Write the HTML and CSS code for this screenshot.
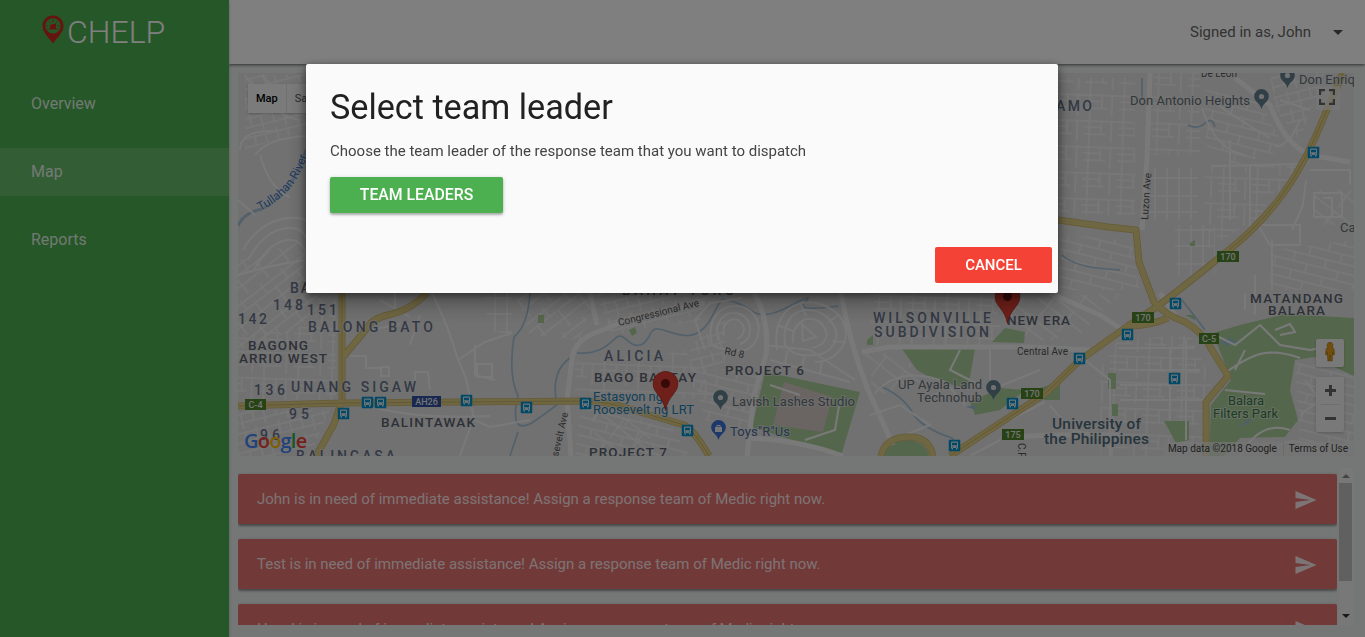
FILE: index.html
```html
<!DOCTYPE html>
<html lang="en">
<head>
<meta charset="utf-8">
<title>CHELP</title>
<link rel="stylesheet" href="styles.css">
</head>
<body>
<div class="app">
  <nav class="sidebar">
    <div class="brand">
      <svg class="brand-pin" viewBox="0 0 22 29" width="22" height="29">
        <path fill="#c82a20" fill-rule="evenodd" d="M11 0.5C4.8.5.5 5 .5 10.8.5 17.200 6 22 11 28.500 16 22 21.500 17.200 21.500 10.800 21.500 5 17.200.5 11 .5ZM11 3.300a7.600 7.600 0 1 1 0 15.200 7.600 7.600 0 0 1 0-15.200Z"/>
        <path fill="#c82a20" d="M8 10L11 9 14 8.500V13.500H15V14.500H7V13.500H8Z"/>
        <path stroke="#c82a20" stroke-width=".9" d="M11 4.500v2.500M6.600 6.300l1.700 1.700M15.400 6.300l-1.700 1.700M4.500 10.800h2M15.500 10.800h2M5.300 14h1M15.700 14h1"/>
      </svg>
      <span>CHELP</span>
    </div>
    <ul class="menu">
      <li>Overview</li>
      <li class="active">Map</li>
      <li>Reports</li>
    </ul>
  </nav>
  <div class="page">
    <header class="topbar"><span>Signed in as, John</span><i class="caret"></i></header>
    <main class="content">
      <section class="map">
        <svg class="map-canvas" viewBox="238 73 1116 383" width="1116" height="383">
          <defs>
            <pattern id="g1" width="34" height="26" patternUnits="userSpaceOnUse" patternTransform="rotate(2)"><path class="st" d="M0 5H34M0 18H22M0 11H17M5 0V26M17 5V18M27 5V26"/></pattern>
            <pattern id="g2" width="26" height="32" patternUnits="userSpaceOnUse" patternTransform="rotate(-38)"><path class="st" d="M0 4H26M0 12H26M0 22H26M4 0V12M15 12V32"/></pattern>
            <pattern id="g3" width="32" height="18" patternUnits="userSpaceOnUse" patternTransform="rotate(14)"><path class="st" d="M0 3H32M0 12H32M6 3V12M20 0V3M20 12V18"/></pattern>
            <pattern id="g4" width="12" height="34" patternUnits="userSpaceOnUse"><path class="st" d="M3 0V34M0 8H12M0 26H12"/></pattern>
            <pattern id="g5" width="23" height="19" patternUnits="userSpaceOnUse" patternTransform="rotate(-14)"><path class="st" d="M0 4H23M0 13H23M7 0V13M18 4V19"/></pattern>
            <pattern id="g6" width="24" height="30" patternUnits="userSpaceOnUse" patternTransform="rotate(38)"><path class="st" d="M0 5H24M0 16H24M6 5V30"/></pattern>
            <symbol id="bus" viewBox="0 0 12 12"><rect width="12" height="12" rx="1.200" fill="#0591cf"/><path fill="#dcebf2" fill-rule="evenodd" d="M3.500 2h5q1 0 1 1v5.500H9V10H7.500V8.500h-3V10H3V8.500h-.5V3q0-1 1-1ZM3.500 3.300v2.500h5V3.300ZM3.500 7v.9h1V7ZM7.500 7v.9h1V7Z"/></symbol>
            <symbol id="pin" viewBox="0 0 26 40"><path fill="#e04034" stroke="#a52a20" stroke-width=".7" d="M13 .5C6 .5.5 6 .5 12.500.5 22 10.500 25 13 39.500 15.500 25 25.500 22 25.500 12.500 25.500 6 20 .5 13 .5Z"/><circle cx="13" cy="12.500" r="4.500" fill="#6b1510"/></symbol>
            <symbol id="poi" viewBox="0 0 15 20"><path d="M7.500 0A7.300 7.300 0 0 0 .2 7.500C.2 13 6 14 7.500 20 9 14 14.800 13 14.800 7.500A7.300 7.300 0 0 0 7.500 0Z"/></symbol>
            <path id="river" d="M260 211Q286 198 298 177T307 145"/>
          </defs>
          <rect x="238" y="73" width="1116" height="383" fill="#e2e2e3"/>
          <path fill="url(#g2)" d="M238 260L325 235 338 290 295 330 238 350Z"/>
          <path fill="url(#g1)" d="M238 335L295 330 336 300V400H238Z"/>
          <path fill="url(#g5)" d="M238 410H330L310 456H238ZM245 75H306V130L245 150Z"/>
          <path fill="url(#g4)" d="M485 293H512V335L488 330Z"/>
          <path fill="url(#g2)" d="M515 293H595L580 340 530 335Z"/>
          <path fill="url(#g5)" d="M595 293H710L700 320 612 335ZM690 345L725 320 725 370 690 375Z"/>
          <path fill="url(#g1)" d="M575 360L685 350 720 400 610 395 575 390Z"/>
          <path fill="url(#g3)" d="M580 405L670 425 690 456H575ZM690 365L765 375 750 430 705 420Z"/>
          <path fill="url(#g6)" d="M590 412L660 424 640 456H600Z"/>
          <path fill="url(#g1)" d="M870 293H1000V345H870Z"/>
          <path fill="url(#g6)" d="M862 355L900 352 930 385 875 395Z"/>
          <path fill="url(#g1)" d="M1058 78H1135V215H1058ZM1150 73H1200V155H1150Z"/>
          <path fill="url(#g4)" d="M1145 168H1198V220H1145ZM1175 225H1215V275H1175Z"/>
          <path fill="url(#g3)" d="M1205 90L1260 100 1285 150 1235 165 1205 145ZM1060 235L1132 240 1140 290H1060Z"/>
          <path fill="url(#g5)" d="M1270 73H1325L1300 140 1275 110Z"/>
          <path fill="url(#g1)" d="M1205 165H1300L1255 220 1205 250ZM1118 340L1190 335 1212 380 1200 456H1100V370Z"/>
          <path fill="url(#g3)" d="M1295 360L1354 375V456H1300ZM1270 250L1354 240V290H1270Z"/>
          <path fill="url(#g6)" d="M1315 190H1354V225H1315ZM1000 300L1120 293 1080 335 1020 345Z"/>

          <g fill="#a9cf99">
            <path d="M765 372L860 392 841 456 752 427Z"/>
            <path d="M902 349H975L968 388Q935 382 917 370Z"/>
            <path d="M970 402L1000 388 1025 390 1000 410 975 415ZM992 342L1005 328 1025 332 1024 343ZM1040 388L1060 382V400H1044Z"/>
            <path d="M1213 333L1240 325 1285 314 1354 318V376L1332 366 1322 356 1295 360 1290 390 1298 420 1285 437 1240 438 1224 456H1209L1211 405 1231 380Z"/>
            <path d="M1108 373H1116V389H1108ZM1112 404H1118V416H1112ZM1164 421H1189V440L1176 443ZM1185 315H1195V320Z"/>
            <path d="M538 315H544V323H538ZM629 330L635 327 637 333 632 336ZM867 340L873 335V345H867ZM1190 243L1195 240V246H1190Z"/>
            <ellipse cx="906" cy="457" rx="23" ry="17"/>
          </g>
          <path fill="#d5c9c6" d="M784 382L832 397 823 432 773 425Z"/>
          <g class="water">
            <path d="M238 226Q243 213 262 209 292 195 306 150" stroke-width="3"/>
            <path d="M530 293Q528 325 514 337 508 375 518 396 509 435 532 423L557 405Q550 372 570 358M510 456L518 432"/>
            <path d="M577 353C602 355 610 342 617 337S629 348 640 345 648 328 658 329 686 341 699 332 711 315 722 299M722 299Q740 302 752 311T790 306 805 302 838 306M880 386Q903 396 912 412T952 438L960 452"/>
            <path d="M1142 78V100M1188 125Q1198 130 1205 123T1215 127M1062 255Q1075 268 1120 270M1182 300Q1190 310 1205 330M1216 342H1236" />
          </g>
          <path fill="#9dc0d8" d="M1222 341L1229 338 1237 342 1226 346ZM966 407L974 405 977 410ZM1237 428L1250 418V422Z"/>

          <g class="minor">
            <path d="M245 75Q270 115 300 120M262 75L280 95M240 150Q240 130 275 131M255 155Q268 138 306 136M260 155Q270 190 290 197M238 200L255 215"/>
            <path d="M243 250Q260 220 290 218T306 245M248 260Q264 230 288 228T306 260M254 270Q270 240 290 240T306 275M238 275Q270 265 306 260"/>
            <path d="M432 293Q450 330 458 360L466 378 474 420 490 427 530 420M458 360L485 342 512 333M350 400Q400 420 490 416M470 428L460 456M350 356H366V368H381M410 345L420 315M475 345V375L495 380M415 388V372H428L430 390"/>
            <path d="M380 300L410 317M395 293V315M370 330L400 324M477 364H492V377H477ZM381 367H389V376H381Z"/>
            <path d="M712 345C705 315 725 302 743 307 765 315 762 345 745 350 728 353 712 345 712 345M718 340C714 320 725 310 740 314 754 321 753 340 740 344M724 336C721 324 730 317 738 320 747 326 745 335 737 339M705 350L695 320 710 303 742 298M765 345L810 350 855 380"/>
            <path d="M777 350C770 302 812 290 839 315 857 340 836 362 815 362M785 345C780 310 810 300 830 320 845 338 830 355 815 355 796 357 788 350 785 345M793 343C790 322 810 312 822 324 833 338 822 346 812 348M803 341L802 324 816 337ZM777 325L793 331M800 302L806 316M839 315L828 322M846 342L832 341M770 360L850 382M785 365L787 351M802 368L804 357M820 373L822 361"/>
            <path d="M875 393Q900 365 945 382L965 405M960 350L950 370 980 385M990 348V390L1040 370"/>
            <path d="M1202 108Q1215 150 1245 155M1205 95Q1230 115 1270 138M1280 100L1310 110M1300 120Q1290 145 1275 147M1212 166L1300 164M1230 140V220M1250 165V235M1306 180L1303 205 1292 230M1258 225H1300V245H1270ZM1314 193H1342V217H1314ZM1323 198H1332V217"/>
            <path d="M1225 373Q1250 355 1265 353T1300 358M1215 335L1235 345 1260 325 1280 345 1310 350 1335 345M1245 350L1235 370M1275 330L1290 324 1295 332 1280 335M1225 390Q1245 392 1265 394M1305 380L1320 400 1300 415M1240 456Q1260 420 1290 430M1270 456Q1285 430 1320 450"/>
            <path d="M1085 360L1110 380V456M1118 348H1195M1118 370H1200M1120 400H1205M1170 350V420M1186 340V440M1120 385H1190M1050 405L1070 430 1100 435M1245 293V310M1255 275V315M1272 240V290"/>
            <path d="M870 415L900 405 930 425 900 437M925 400L940 392M1010 420L1045 402M970 456L1000 440M1310 170H1350V185M770 385L800 395M805 440L835 430 840 400"/>
          </g>
          <g class="major">
            <path d="M590 293L597 325M571 456L567 400 572 360Q573 344 590 335L625 321 705 303M754 293Q770 320 766 355L754 395 747 456M747 438Q800 440 843 456"/>
            <path d="M841 293Q850 345 868 390L893 445M862 352L890 347H1030L1090 350M1050 293L1100 315 1120 328M1160 293L1175 315M1150 73L1147 160 1142 230M1235 78L1270 105Q1285 145 1310 155L1350 162M1010 437L1050 435H1120"/>
          </g>
          <g class="hw-edge">
            <path d="M342 293V400L334 424 316 456M427 293Q410 310 392 314T370 324 342 358M238 406L342 403 585 401Q610 402 630 409L684 425Q694 430 709 456"/>
            <path d="M1343 73L1326 112Q1305 165 1280 198T1220 257Q1180 290 1155 308L1128 326 1080 360 1046 393 950 456M1058 220L1108 227 1136 230 1139 262 1154 302Q1165 315 1185 322 1204 333 1212 350L1228 376 1206 402V456M1168 318Q1150 326 1128 326"/>
            <path d="M881 456Q885 438 907 437T933 456"/>
          </g>
          <g class="hw">
            <path d="M342 293V400L334 424 316 456M427 293Q410 310 392 314T370 324 342 358M238 406L342 403 585 401Q610 402 630 409L684 425Q694 430 709 456"/>
            <path d="M1343 73L1326 112Q1305 165 1280 198T1220 257Q1180 290 1155 308L1128 326 1080 360 1046 393 950 456M1058 220L1108 227 1136 230 1139 262 1154 302Q1165 315 1185 322 1204 333 1212 350L1228 376 1206 402V456M1168 318Q1150 326 1128 326"/>
            <path d="M881 456Q885 438 907 437T933 456"/>
          </g>
          <path class="hw-line" d="M342 293V400M238 406L342 403 585 401Q610 402 630 409L684 425Q694 430 709 456M1343 73L1326 112Q1305 165 1280 198T1220 257M1080 360L1046 393 950 456"/>

          <g class="area">
            <text x="290" y="293">BA</text>
            <text x="273" y="310" textLength="32">148</text><text x="307" y="315" textLength="32">151</text><text x="238" y="324" textLength="31">142</text>
            <text x="308" y="332" textLength="127">BALONG BATO</text><text x="291" y="392" textLength="127">UNANG SIGAW</text>
            <text x="254" y="395" textLength="33">136</text><text x="289" y="419" textLength="22">95</text><text x="260" y="440" textLength="22">96</text>
            <text x="296" y="461" textLength="101">BALINGASA</text><text x="604" y="361" textLength="61">ALICIA</text>
            <text x="873" y="323" textLength="120">WILSONVILLE</text><text x="874" y="337" textLength="117">SUBDIVISION</text><text x="1056" y="111" textLength="38">AMO</text>
          </g>
          <g class="district">
            <text x="248" y="350" textLength="60">BAGONG</text><text x="239" y="363" textLength="88">ARRIO WEST</text><text x="381" y="427" textLength="94">BALINTAWAK</text>
            <text x="594" y="382" textLength="102">BAGO BANTAY</text><text x="725" y="375" textLength="79">PROJECT 6</text><text x="589" y="457" textLength="78">PROJECT 7</text>
            <text x="622" y="295" textLength="112">BAHAY TORO</text><text x="1007" y="325" textLength="63">NEW ERA</text><text x="1250" y="303" textLength="93">MATANDANG</text><text x="1268" y="315" textLength="57">BALARA</text>
          </g>
          <g class="place">
            <text x="732" y="406" textLength="123">Lavish Lashes Studio</text><text x="898" y="389" textLength="84">UP Ayala Land</text><text x="917" y="402" textLength="65">Technohub</text>
            <text x="1130" y="105" textLength="120">Don Antonio Heights</text><text x="1299" y="84">Don Enriq</text><text x="1340" y="232">Ca</text>
          </g>
          <g class="station"><text x="593" y="401" textLength="70">Estasyon ng</text><text x="593" y="414" textLength="101">Roosevelt ng LRT</text></g>
          <text class="shop" x="730" y="436" textLength="60">Toys"R"Us</text>
          <g class="campus"><text x="1052" y="429" textLength="89">University of</text><text x="1044" y="444" textLength="105">the Philippines</text></g>
          <g class="park"><text x="1228" y="405" textLength="36">Balara</text><text x="1213" y="418" textLength="65">Filters Park</text></g>
          <g class="road">
            <text x="1017" y="355" textLength="51">Central Ave</text><text x="1201" y="77" textLength="36">De León</text>
            <text transform="translate(619 326) rotate(-14)" textLength="83">Congressional Ave</text><text transform="translate(724 354) rotate(12)" textLength="20">Rd 8</text>
            <text transform="translate(1148 220) rotate(-86)" textLength="47">Luzon Ave</text><text transform="translate(558 457) rotate(-77)" textLength="45">sevelt Ave</text><text transform="translate(1018 443) rotate(90)">C.P. Garcia</text>
          </g>
          <text class="river-name"><textPath href="#river">Tullahan River</textPath></text>
          <g class="shield">
            <rect x="245" y="399" width="21" height="11"/><text x="255.500" y="408">C-4</text>
            <rect x="1132" y="312" width="22" height="11"/><text x="1143" y="321">170</text>
            <rect x="1199" y="333" width="20" height="11"/><text x="1209" y="342">C-5</text>
            <rect x="1021" y="388" width="22" height="11"/><text x="1032" y="397">170</text>
            <rect x="1002" y="429" width="22" height="11"/><text x="1013" y="438">175</text>
            <rect x="1217" y="251" width="22" height="11"/><text x="1228" y="260">170</text>
            <rect class="ah" x="412" y="396" width="29" height="11"/><text x="426.500" y="405">AH26</text>
          </g>
          <g transform="translate(.5 .5)">
            <use href="#bus" x="361" y="396" width="12" height="12"/><use href="#bus" x="374" y="396" width="12" height="12"/><use href="#bus" x="337" y="407" width="12" height="12"/><use href="#bus" x="460" y="394" width="12" height="12"/><use href="#bus" x="520" y="401" width="12" height="12"/><use href="#bus" x="579" y="397" width="12" height="12"/><use href="#bus" x="681" y="424" width="12" height="12"/><use href="#bus" x="948" y="439" width="12" height="12"/><use href="#bus" x="1006" y="397" width="12" height="12"/><use href="#bus" x="1073" y="352" width="12" height="12"/><use href="#bus" x="1121" y="328" width="12" height="12"/><use href="#bus" x="1169" y="297" width="12" height="12"/><use href="#bus" x="1168" y="372" width="12" height="12"/><use href="#bus" x="1307" y="146" width="12" height="12"/>
          </g>
          <g fill="#63808f">
            <use href="#poi" x="713" y="390" width="15" height="20"/><use href="#poi" x="986" y="380" width="15" height="20"/><use href="#poi" x="1254" y="89" width="15" height="20"/><use href="#poi" x="1280" y="68" width="15" height="20"/>
          </g>
          <use href="#poi" x="711" y="420" width="15" height="20" fill="#3973d4"/>
          <path fill="#e8ecf4" fill-rule="evenodd" d="M715 427H722V432H715ZM716.500 427V425H720.500V427H719.500V426H717.500V427Z"/>
          <g fill="#e2e2e3"><circle cx="720.500" cy="397.500" r="2.600"/><circle cx="993.500" cy="387.500" r="2.600"/><circle cx="1261.500" cy="96.500" r="2.600"/><circle cx="1287.500" cy="75.500" r="2.600"/></g>
          <use href="#pin" x="652.500" y="371" width="26" height="40"/><use href="#pin" x="994.500" y="284" width="26" height="40"/>
        </svg>
        <div class="map-types"><span class="on">Map</span><span>Satellite</span></div>
        <div class="fullscreen"><svg width="16" height="16" viewBox="0 0 16 16"><path fill="none" stroke="#666" stroke-width="2.200" d="M1.100 6V1.100H6M10 1.100h4.900V6M14.900 10v4.900H10M6 14.900H1.100V10"/></svg></div>
        <div class="pegman"><svg width="14" height="20" viewBox="0 0 14 20"><path fill="#e39d1c" stroke="#a8740f" stroke-width=".7" d="M7 .5a2.700 2.700 0 0 1 1.800 4.900Q10.800 5.700 11 7.500l.4 5-1.200.5-.6-3-.5 9H7.500l-.5-6-.5 6H4.900l-.5-9-.6 3-1.200-.5L3 7.500q.2-1.800 2.200-2.100A2.700 2.700 0 0 1 7 .5Z"/></svg></div>
        <div class="zoomer"><i class="plus"></i><hr><i class="minus"></i></div>
        <div class="google"><b class="gb">G</b><b class="gr">o</b><b class="gy">o</b><b class="gb">g</b><b class="gg">l</b><b class="gr">e</b></div>
        <div class="legal"><span>Map data ©2018 Google</span><span>Terms of Use</span></div>
      </section>
      <section class="alerts">
        <div class="alert-list">
          <article class="alert"><span>John is in need of immediate assistance! Assign a response team of Medic right now.</span><svg width="22" height="18" viewBox="0 0 21 18"><path fill="#fff" fill-opacity=".85" d="M0 18L21 9 0 0V7L15 9 0 11Z"/></svg></article>
          <article class="alert"><span>Test is in need of immediate assistance! Assign a response team of Medic right now.</span><svg width="22" height="18" viewBox="0 0 21 18"><path fill="#fff" fill-opacity=".85" d="M0 18L21 9 0 0V7L15 9 0 11Z"/></svg></article>
          <article class="alert"><span>Hazel is in need of immediate assistance! Assign a response team of Medic right now.</span><svg width="22" height="18" viewBox="0 0 21 18"><path fill="#fff" fill-opacity=".85" d="M0 18L21 9 0 0V7L15 9 0 11Z"/></svg></article>
        </div>
        <div class="scroll"><i class="up"></i><div class="thumb"></div><i class="down"></i></div>
      </section>
    </main>
  </div>
</div>
<div class="overlay"></div>
<div class="modal">
  <div class="modal-body">
    <h4>Select team leader</h4>
    <p>Choose the team leader of the response team that you want to dispatch</p>
    <button class="btn green">TEAM LEADERS</button>
  </div>
  <div class="modal-foot"><button class="btn red">CANCEL</button></div>
</div>
</body>
</html>
```
FILE: styles.css
```css
* { box-sizing: border-box; }
body { margin: 0; font: 15px/1.5 Roboto, sans-serif; color: rgba(0,0,0,.87); overflow: hidden; }
.app { display: flex; height: 637px; background: #ebefee; }
.sidebar { width: 229px; background: #4caf50; flex: none; box-shadow: 0 2px 3px rgba(0,0,0,.25); z-index: 2; }
.brand { display: flex; height: 64px; padding: 15px 0 0 42px; gap: 3px; color: #fff; font-size: 32px; font-weight: 300; line-height: 34px; }
.brand-pin { flex: none; }
.menu { list-style: none; margin: 16px 0 0; padding: 0; display: flex; flex-direction: column; gap: 20px; color: rgba(255,255,255,.85); font-size: 16px; }
.menu li { height: 48px; line-height: 47px; padding-left: 31px; }
.menu .active { background: rgba(255,255,255,.15); }
.page { flex: 1; min-width: 0; }
.topbar { position: relative; height: 64px; background: #fff; box-shadow: 0 1px 3px rgba(0,0,0,.6); display: flex; align-items: center; justify-content: flex-end; padding-right: 22px; gap: 22px; color: #666; }
.caret { border: 5px solid transparent; border-top-color: #505050; border-bottom: 0; }
.content { padding: 9px 11px 0 9px; }
.map { position: relative; height: 383px; overflow: hidden; }
.map-canvas { display: block; font-family: Roboto, sans-serif; }
.st { fill: none; stroke: #f2f2f2; stroke-width: 1.5; }
.minor { fill: none; stroke: #f3f3f3; stroke-width: 2; }
.major { fill: none; stroke: #f3f3f3; stroke-width: 5; stroke-linejoin: round; }
.water { fill: none; stroke: #a5c2d6; stroke-width: 1.7; }
.hw-edge { fill: none; stroke: #cbb56f; stroke-width: 7; stroke-linejoin: round; }
.hw { fill: none; stroke: #dfcc85; stroke-width: 5.500; stroke-linejoin: round; }
.hw-line { fill: none; stroke: #c9b269; stroke-width: 1; }
.map-canvas text { paint-order: stroke; stroke: rgba(232,232,232,.6); stroke-width: 2px; }
.area { font-size: 14px; font-weight: 500; fill: #68738b; letter-spacing: 2px; }
.district { font-size: 13.500px; font-weight: 500; fill: #5c6270; }
.place { font-size: 13px; fill: #647078; }
.station { font-size: 13px; fill: #267eaf; }
.shop { font-size: 13px; fill: #4c6a9c; }
.campus { font-size: 15.500px; font-weight: 500; fill: #4f6b7a; }
.park { font-size: 13px; fill: #367840; }
.road { font-size: 10px; fill: #555; }
.river-name { font-size: 12px; fill: #3f76bc; }
.shield rect { fill: #4f862c; }
.shield .ah { fill: #3150a0; }
.shield text { font-size: 9px; font-weight: 500; fill: #e8e8e8; stroke: none; text-anchor: middle; }
.map-types { position: absolute; left: 10px; top: 11px; display: flex; background: #f6f6f6; height: 29px; font-size: 11px; line-height: 29px; color: #565656; box-shadow: 0 1px 2px rgba(0,0,0,.2); }
.map-types span { padding: 0 8px; }
.map-types .on { color: #000; font-weight: 500; border-right: 1px solid #e0e0e0; }
.fullscreen { position: absolute; left: 1078px; top: 13px; width: 24px; height: 24px; padding: 3px; background: rgba(240,240,240,.7); }
.fullscreen svg { display: block; }
.pegman, .zoomer { position: absolute; left: 1078px; width: 28px; background: #f3f3f3; border-radius: 2px; box-shadow: 0 1px 3px rgba(0,0,0,.2); }
.pegman { top: 266px; height: 28px; padding: 3px 7px; }
.pegman svg { display: block; }
.zoomer { top: 304px; height: 55px; display: grid; grid-template-rows: 27px 1px 27px; justify-items: center; align-items: center; }
.zoomer hr { width: 18px; height: 1px; margin: 0; border: 0; background: #ddd; }
.plus { width: 11px; height: 11px; background: linear-gradient(#666,#666) center/11px 3px no-repeat, linear-gradient(#666,#666) center/3px 11px no-repeat; }
.minus { width: 11px; height: 3px; background: #666; }
.google { position: absolute; left: 6px; top: 355px; font: 20px/26px "Open Sans", sans-serif; letter-spacing: -.8px; }
.google b { font-weight: 600; }
.gb { color: #4285f4; } .gr { color: #ea4335; } .gy { color: #fbbc05; } .gg { color: #34a853; }
.legal { position: absolute; right: 0; bottom: 0; height: 14px; display: flex; font-size: 10px; line-height: 14px; color: #444; }
.legal span { padding: 0 6px 0 5px; background: rgba(235,235,235,.7); white-space: nowrap; }
.legal span + span { border-left: 1px solid #d5dbd0; }
.alerts { display: flex; gap: 2px; margin-top: 12px; height: 157px; }
.alert-list { width: 1099px; padding-top: 6px; display: flex; flex-direction: column; gap: 15px; overflow: hidden; }
.alert { flex: none; display: flex; align-items: center; justify-content: space-between; height: 50px; padding: 0 20px 0 19px; border-radius: 2px; background: #e57373; color: rgba(255,255,255,.84); box-shadow: 0 2px 2px rgba(0,0,0,.28), 0 1px 4px rgba(0,0,0,.2); }
.alert svg { margin-top: 2px; }
.scroll { width: 14px; display: flex; flex-direction: column; align-items: center; background: #f1f1f1; }
.up, .down { border: 4px solid transparent; }
.up { border-top: 0; border-bottom-color: #888; margin: 6px 0 5px; }
.down { border-bottom: 0; border-top-color: #333; margin-top: 33px; }
.thumb { align-self: flex-start; width: 13px; height: 98px; background: #c1c1c1; }
.overlay { position: fixed; inset: 0; background: rgba(0,0,0,.5); z-index: 5; }
.modal { position: fixed; z-index: 6; left: 306px; top: 64px; width: 752px; height: 229px; background: #fafafa; border-radius: 2px; box-shadow: 0 12px 20px rgba(0,0,0,.28), 0 2px 8px rgba(0,0,0,.5); display: flex; flex-direction: column; justify-content: space-between; }
.modal-body { padding: 24px 24px 0; }
.modal h4 { margin: 0 0 14px; font-size: 34.200px; line-height: 38px; font-weight: 400; color: #212121; }
.modal p { margin: 0 0 14px; line-height: 23px; color: #444; }
.modal-foot { display: flex; justify-content: flex-end; padding: 0 6px 10px; }
.btn { display: block; height: 36px; border: 0; border-radius: 2px; padding: 0; text-align: center; color: #fff; font: 500 15px/36px Roboto, sans-serif; }
.green { background: #4caf50; width: 173px; font-size: 15.800px; box-shadow: 0 2px 2px rgba(0,0,0,.2), 0 1px 4px rgba(0,0,0,.2); }
.red { background: #f44336; width: 117px; }
```
